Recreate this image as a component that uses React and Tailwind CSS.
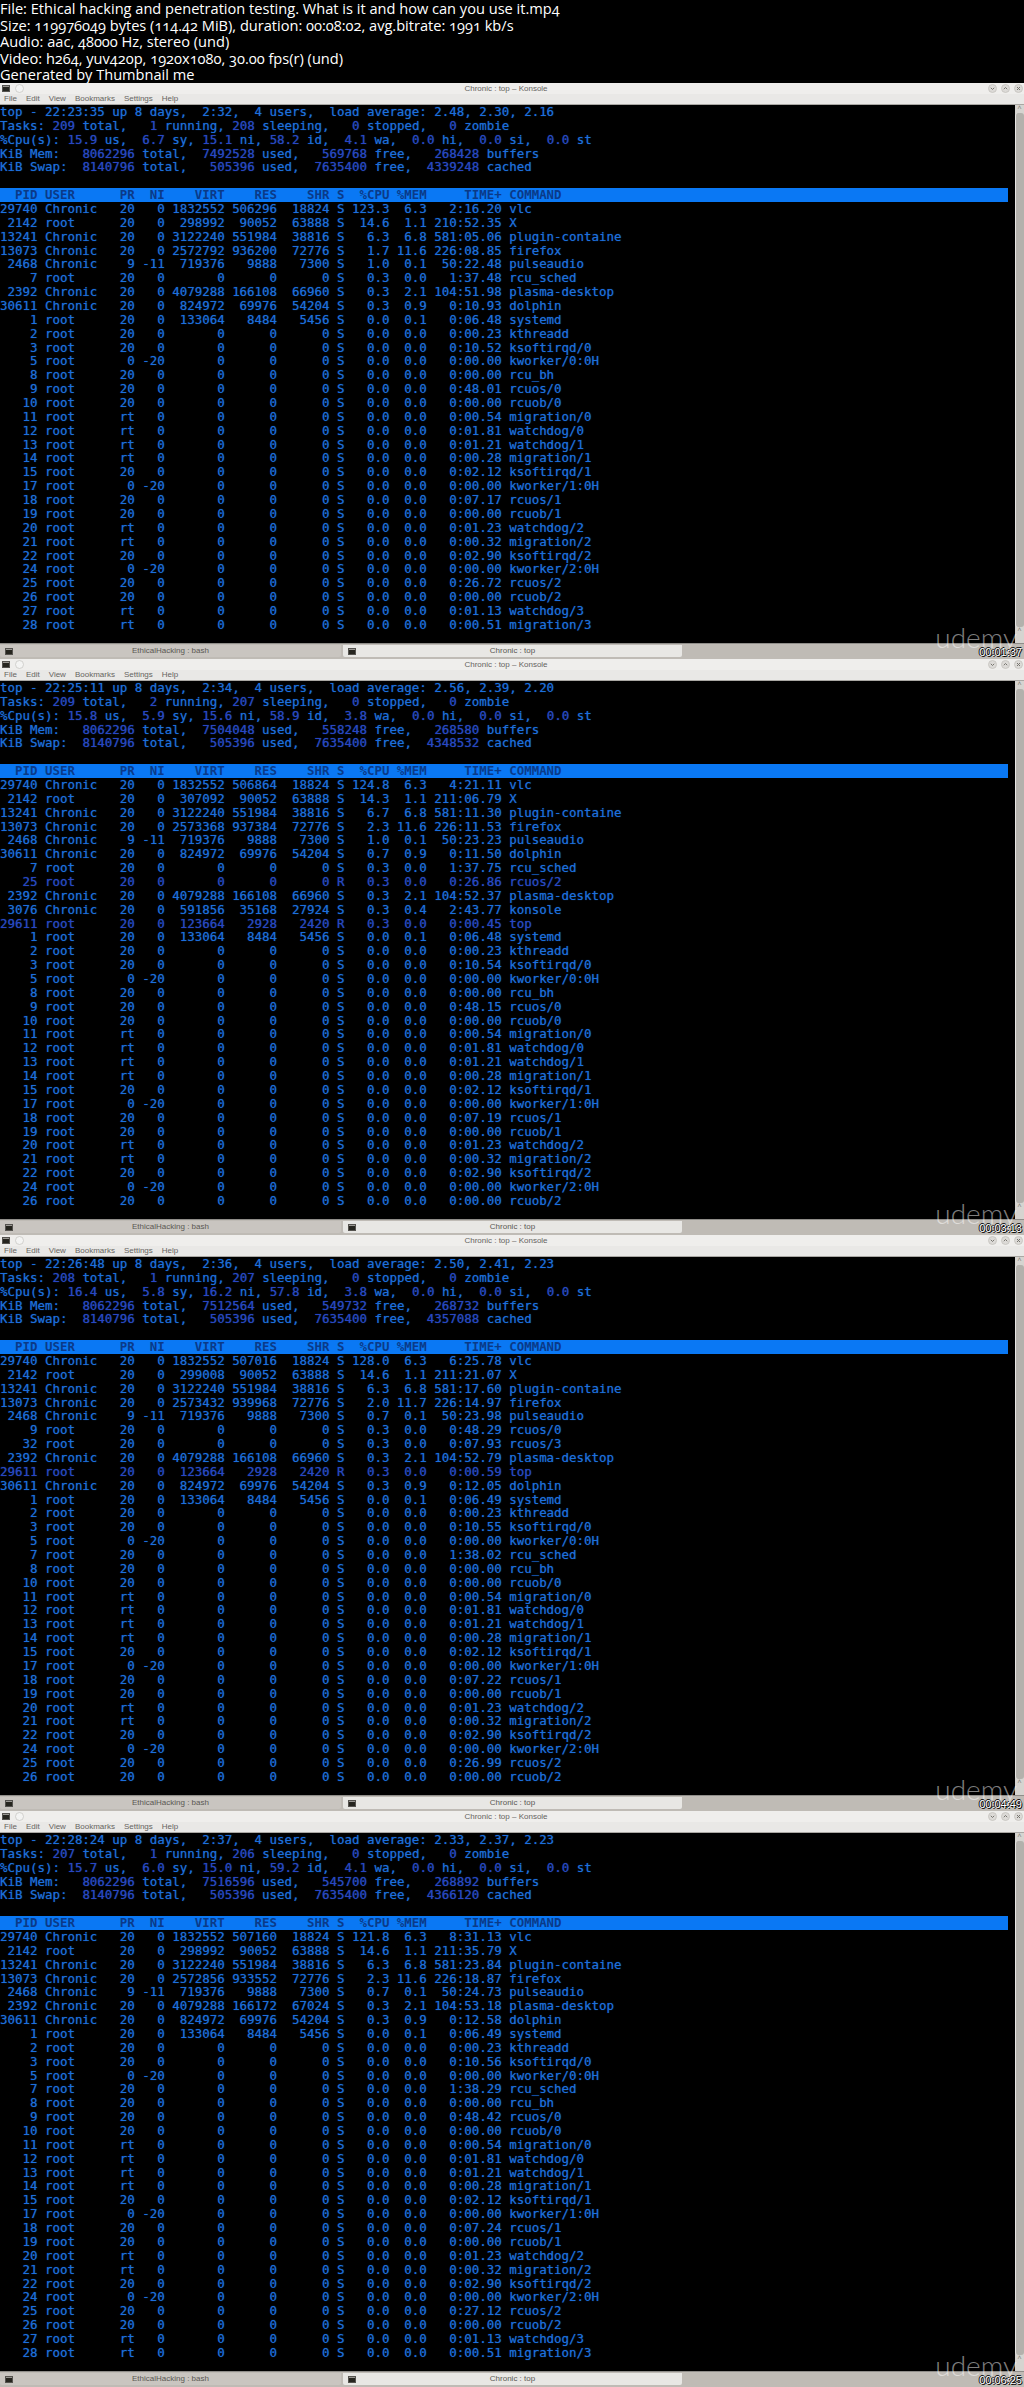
import React from "react";

const KERNEL = {
  2: ["20", "0", "0:00.23", "kthreadd"], 3: ["20", "0", "", "ksoftirqd/0"], 5: ["0", "-20", "0:00.00", "kworker/0:0H"],
  7: ["20", "0", "", "rcu_sched"], 8: ["20", "0", "0:00.00", "rcu_bh"], 9: ["20", "0", "", "rcuos/0"],
  10: ["20", "0", "0:00.00", "rcuob/0"], 11: ["rt", "0", "0:00.54", "migration/0"], 12: ["rt", "0", "0:01.81", "watchdog/0"],
  13: ["rt", "0", "0:01.21", "watchdog/1"], 14: ["rt", "0", "0:00.28", "migration/1"], 15: ["20", "0", "0:02.12", "ksoftirqd/1"],
  17: ["0", "-20", "0:00.00", "kworker/1:0H"], 18: ["20", "0", "", "rcuos/1"], 19: ["20", "0", "0:00.00", "rcuob/1"],
  20: ["rt", "0", "0:01.23", "watchdog/2"], 21: ["rt", "0", "0:00.32", "migration/2"], 22: ["20", "0", "0:02.90", "ksoftirqd/2"],
  24: ["0", "-20", "0:00.00", "kworker/2:0H"], 25: ["20", "0", "", "rcuos/2"], 26: ["20", "0", "0:00.00", "rcuob/2"],
  27: ["rt", "0", "0:01.13", "watchdog/3"], 28: ["rt", "0", "0:00.51", "migration/3"],
};

const k = (pids, times) =>
  pids.map((p) => {
    const [pr, ni, t, cmd] = KERNEL[p];
    return `${p} root ${pr} ${ni} 0 0 0 S 0.0 0.0 ${times[p] || t} ${cmd}`;
  });

const fmt = (line) => {
  const [pid, user, pr, ni, virt, res, shr, s, cpu, mem, time, cmd] = line.split(" ");
  return (
    pid.padStart(5) + " " + user.padEnd(9) + pr.padStart(3) + ni.padStart(4) + virt.padStart(8) + res.padStart(7) +
    shr.padStart(7) + " " + s + cpu.padStart(6) + mem.padStart(5) + time.padStart(10) + " " + cmd
  );
};

const FRAMES = [
  {
    stamp: "00:01:37",
    summary: [
      "top - 22:23:35 up 8 days,  2:32,  4 users,  load average: 2.48, 2.30, 2.16",
      "Tasks: 209 total,   1 running, 208 sleeping,   0 stopped,   0 zombie",
      "%Cpu(s): 15.9 us,  6.7 sy, 15.1 ni, 58.2 id,  4.1 wa,  0.0 hi,  0.0 si,  0.0 st",
      "KiB Mem:   8062296 total,  7492528 used,   569768 free,   268428 buffers",
      "KiB Swap:  8140796 total,   505396 used,  7635400 free,  4339248 cached",
    ],
    rows: [
      "29740 Chronic 20 0 1832552 506296 18824 S 123.3 6.3 2:16.20 vlc",
      "2142 root 20 0 298992 90052 63888 S 14.6 1.1 210:52.35 X",
      "13241 Chronic 20 0 3122240 551984 38816 S 6.3 6.8 581:05.06 plugin-containe",
      "13073 Chronic 20 0 2572792 936200 72776 S 1.7 11.6 226:08.85 firefox",
      "2468 Chronic 9 -11 719376 9888 7300 S 1.0 0.1 50:22.48 pulseaudio",
      "7 root 20 0 0 0 0 S 0.3 0.0 1:37.48 rcu_sched",
      "2392 Chronic 20 0 4079288 166108 66960 S 0.3 2.1 104:51.98 plasma-desktop",
      "30611 Chronic 20 0 824972 69976 54204 S 0.3 0.9 0:10.93 dolphin",
      "1 root 20 0 133064 8484 5456 S 0.0 0.1 0:06.48 systemd",
      ...k([2, 3, 5, 8, 9, 10, 11, 12, 13, 14, 15, 17, 18, 19, 20, 21, 22, 24, 25, 26, 27, 28], { 3: "0:10.52", 9: "0:48.01", 18: "0:07.17", 25: "0:26.72" }),
    ],
  },
  {
    stamp: "00:03:13",
    summary: [
      "top - 22:25:11 up 8 days,  2:34,  4 users,  load average: 2.56, 2.39, 2.20",
      "Tasks: 209 total,   2 running, 207 sleeping,   0 stopped,   0 zombie",
      "%Cpu(s): 15.8 us,  5.9 sy, 15.6 ni, 58.9 id,  3.8 wa,  0.0 hi,  0.0 si,  0.0 st",
      "KiB Mem:   8062296 total,  7504048 used,   558248 free,   268580 buffers",
      "KiB Swap:  8140796 total,   505396 used,  7635400 free,  4348532 cached",
    ],
    rows: [
      "29740 Chronic 20 0 1832552 506864 18824 S 124.8 6.3 4:21.11 vlc",
      "2142 root 20 0 307092 90052 63888 S 14.3 1.1 211:06.79 X",
      "13241 Chronic 20 0 3122240 551984 38816 S 6.7 6.8 581:11.30 plugin-containe",
      "13073 Chronic 20 0 2573368 937384 72776 S 2.3 11.6 226:11.53 firefox",
      "2468 Chronic 9 -11 719376 9888 7300 S 1.0 0.1 50:23.23 pulseaudio",
      "30611 Chronic 20 0 824972 69976 54204 S 0.7 0.9 0:11.50 dolphin",
      "7 root 20 0 0 0 0 S 0.3 0.0 1:37.75 rcu_sched",
      "25 root 20 0 0 0 0 R 0.3 0.0 0:26.86 rcuos/2",
      "2392 Chronic 20 0 4079288 166108 66960 S 0.3 2.1 104:52.37 plasma-desktop",
      "3076 Chronic 20 0 591856 35168 27924 S 0.3 0.4 2:43.77 konsole",
      "29611 root 20 0 123664 2928 2420 R 0.3 0.0 0:00.45 top",
      "1 root 20 0 133064 8484 5456 S 0.0 0.1 0:06.48 systemd",
      ...k([2, 3, 5, 8, 9, 10, 11, 12, 13, 14, 15, 17, 18, 19, 20, 21, 22, 24, 26], { 3: "0:10.54", 9: "0:48.15", 18: "0:07.19" }),
    ],
  },
  {
    stamp: "00:04:49",
    summary: [
      "top - 22:26:48 up 8 days,  2:36,  4 users,  load average: 2.50, 2.41, 2.23",
      "Tasks: 208 total,   1 running, 207 sleeping,   0 stopped,   0 zombie",
      "%Cpu(s): 16.4 us,  5.8 sy, 16.2 ni, 57.8 id,  3.8 wa,  0.0 hi,  0.0 si,  0.0 st",
      "KiB Mem:   8062296 total,  7512564 used,   549732 free,   268732 buffers",
      "KiB Swap:  8140796 total,   505396 used,  7635400 free,  4357088 cached",
    ],
    rows: [
      "29740 Chronic 20 0 1832552 507016 18824 S 128.0 6.3 6:25.78 vlc",
      "2142 root 20 0 299008 90052 63888 S 14.6 1.1 211:21.07 X",
      "13241 Chronic 20 0 3122240 551984 38816 S 6.3 6.8 581:17.60 plugin-containe",
      "13073 Chronic 20 0 2573432 939968 72776 S 2.0 11.7 226:14.97 firefox",
      "2468 Chronic 9 -11 719376 9888 7300 S 0.7 0.1 50:23.98 pulseaudio",
      "9 root 20 0 0 0 0 S 0.3 0.0 0:48.29 rcuos/0",
      "32 root 20 0 0 0 0 S 0.3 0.0 0:07.93 rcuos/3",
      "2392 Chronic 20 0 4079288 166108 66960 S 0.3 2.1 104:52.79 plasma-desktop",
      "29611 root 20 0 123664 2928 2420 R 0.3 0.0 0:00.59 top",
      "30611 Chronic 20 0 824972 69976 54204 S 0.3 0.9 0:12.05 dolphin",
      "1 root 20 0 133064 8484 5456 S 0.0 0.1 0:06.49 systemd",
      ...k([2, 3, 5, 7, 8, 10, 11, 12, 13, 14, 15, 17, 18, 19, 20, 21, 22, 24, 25, 26], { 3: "0:10.55", 7: "1:38.02", 18: "0:07.22", 25: "0:26.99" }),
    ],
  },
  {
    stamp: "00:06:25",
    summary: [
      "top - 22:28:24 up 8 days,  2:37,  4 users,  load average: 2.33, 2.37, 2.23",
      "Tasks: 207 total,   1 running, 206 sleeping,   0 stopped,   0 zombie",
      "%Cpu(s): 15.7 us,  6.0 sy, 15.0 ni, 59.2 id,  4.1 wa,  0.0 hi,  0.0 si,  0.0 st",
      "KiB Mem:   8062296 total,  7516596 used,   545700 free,   268892 buffers",
      "KiB Swap:  8140796 total,   505396 used,  7635400 free,  4366120 cached",
    ],
    rows: [
      "29740 Chronic 20 0 1832552 507160 18824 S 121.8 6.3 8:31.13 vlc",
      "2142 root 20 0 298992 90052 63888 S 14.6 1.1 211:35.79 X",
      "13241 Chronic 20 0 3122240 551984 38816 S 6.3 6.8 581:23.84 plugin-containe",
      "13073 Chronic 20 0 2572856 933552 72776 S 2.3 11.6 226:18.87 firefox",
      "2468 Chronic 9 -11 719376 9888 7300 S 0.7 0.1 50:24.73 pulseaudio",
      "2392 Chronic 20 0 4079288 166172 67024 S 0.3 2.1 104:53.18 plasma-desktop",
      "30611 Chronic 20 0 824972 69976 54204 S 0.3 0.9 0:12.58 dolphin",
      "1 root 20 0 133064 8484 5456 S 0.0 0.1 0:06.49 systemd",
      ...k([2, 3, 5, 7, 8, 9, 10, 11, 12, 13, 14, 15, 17, 18, 19, 20, 21, 22, 24, 25, 26, 27, 28], { 3: "0:10.56", 7: "1:38.29", 9: "0:48.42", 18: "0:07.24", 25: "0:27.12" }),
    ],
  },
];

const HEADER = "  PID USER      PR  NI    VIRT    RES    SHR S  %CPU %MEM     TIME+ COMMAND";

function TermIcon() {
  return (
    <svg width="8" height="7" viewBox="0 0 8 7" className="shrink-0">
      <rect x="0" y="0" width="8" height="7" fill="#55534f" />
      <rect x="1" y="2" width="6" height="4" fill="#26251f" />
      <rect x="1" y="1" width="6" height="1" fill="#9a9893" />
    </svg>
  );
}

function WinButton({ glyph }) {
  return (
    <svg width="9" height="9" viewBox="0 0 9 9" className="shrink-0">
      <circle cx="4.5" cy="4.5" r="4" fill="#dcdad7" stroke="#c4c2be" strokeWidth="0.8" />
      <path d={glyph} fill="none" stroke="#77756f" strokeWidth="1" />
    </svg>
  );
}

function Summary({ line, plain }) {
  if (plain) return <div className="h-[13.87px] whitespace-pre">{line}</div>;
  return (
    <div className="h-[13.87px] whitespace-pre">
      {line.split(/(\d+(?:\.\d+)?)/).map((part, i) =>
        i % 2 ? (
          <span key={i} className="text-[#2a45c4]">
            {part}
          </span>
        ) : (
          <span key={i}>{part}</span>
        ),
      )}
    </div>
  );
}

function Frame({ frame }) {
  return (
    <section className="relative flex h-[576px] flex-col overflow-hidden">
      <div className="relative flex h-[11px] shrink-0 items-center justify-between bg-[#efeeec] pl-[2px] pr-[1px]">
        <div className="flex items-center gap-[5px]">
          <TermIcon />
          <svg width="9" height="9" viewBox="0 0 9 9" className="shrink-0">
            <circle cx="4.5" cy="4.5" r="4" fill="#f4f4f3" stroke="#c9c8c5" strokeWidth="0.8" />
          </svg>
        </div>
        <div className="text-[8px] leading-[11px] text-[#66645f] [font-family:'Liberation_Sans',sans-serif]">Chronic : top – Konsole</div>
        <div className="flex items-center gap-[4px]">
          <WinButton glyph="M2.8 3.8 L4.5 5.5 L6.2 3.8" />
          <WinButton glyph="M2.8 5.2 L4.5 3.5 L6.2 5.2" />
          <WinButton glyph="M3 3 L6 6 M6 3 L3 6" />
        </div>
      </div>
      <nav className="flex h-[11px] shrink-0 items-center gap-[9px] border-b border-[#a9a7a3] bg-[#e9e8e6] pl-[4px] text-[8px] text-[#66645f] [font-family:'Liberation_Sans',sans-serif]">
        <span>File</span>
        <span>Edit</span>
        <span>View</span>
        <span>Bookmarks</span>
        <span>Settings</span>
        <span>Help</span>
      </nav>
      <div className="flex min-h-0 flex-1">
        <pre className="min-w-0 flex-1 overflow-hidden bg-black pr-[7px] text-[12.44px] leading-[13.87px] text-[#1c6fdc] [font-family:'DejaVu_Sans_Mono',monospace] [text-shadow:0_0_1px_rgba(28,111,220,0.7)]">
          {frame.summary.map((line, i) => (
            <Summary key={i} line={line} plain={i === 0} />
          ))}
          <div className="h-[13.87px]" />
          <div className="h-[13.87px] bg-[#0a78f4] font-bold text-[#0a3a88] [text-shadow:none]">{HEADER}</div>
          {frame.rows.map((row, i) => (
            <div key={i} className={row.includes(" R ") ? "h-[13.87px] text-[#2a45c4]" : "h-[13.87px]"}>
              {fmt(row)}
            </div>
          ))}
        </pre>
        <aside className="flex w-[9px] shrink-0 flex-col items-center bg-[#d6d4d0]">
          <span className="h-[8px] w-full text-center text-[7px] leading-[8px] text-[#77756f]">^</span>
          <span className="w-full flex-1 rounded-[3px] border-l border-[#e6e5e2] bg-[#b3b1ac]" />
          <span className="h-[8px] w-full text-center text-[7px] leading-[8px] text-[#77756f]">^</span>
          <span className="h-[8px] w-full" />
        </aside>
      </div>
      <div className="flex h-[16px] shrink-0 items-start gap-[2px] border-t border-[#8f8d89] bg-[#bfbbb5] pt-[1px]">
        <div className="flex h-[12px] w-[341px] items-center rounded-b-[2px] bg-[#c9c5c0] pl-[5px] text-[8px] text-[#5a5853] [font-family:'Liberation_Sans',sans-serif]">
          <TermIcon />
          <span className="flex-1 pr-[13px] text-center">EthicalHacking : bash</span>
        </div>
        <div className="flex h-[12px] w-[339px] items-center rounded-b-[2px] bg-[#e8e7e4] pl-[5px] text-[8px] text-[#5a5853] [font-family:'Liberation_Sans',sans-serif]">
          <TermIcon />
          <span className="flex-1 pr-[13px] text-center">Chronic : top</span>
        </div>
      </div>
      <div className="absolute bottom-[8px] right-[7px] text-[28px] font-light leading-none text-white/50 [font-family:Lato,sans-serif]">udemy</div>
      <div className="absolute bottom-[0px] right-[2px] text-[11px] leading-[14px] text-white [font-family:'Liberation_Sans',sans-serif] [text-shadow:1px_1px_0_#000,-1px_0_0_#000,0_-1px_0_#000]">
        {frame.stamp}
      </div>
    </section>
  );
}

export default function App() {
  return (
    <main className="w-[1024px] bg-black">
      <header className="h-[83px] text-[14.6px] leading-[16.5px] text-white oldstyle-nums [font-family:'Open_Sans',sans-serif]">
        <div>File: Ethical hacking and penetration testing. What is it and how can you use it.mp4</div>
        <div>Size: 119976049 bytes (114.42 MiB), duration: 00:08:02, avg.bitrate: 1991 kb/s</div>
        <div>Audio: aac, 48000 Hz, stereo (und)</div>
        <div>Video: h264, yuv420p, 1920x1080, 30.00 fps(r) (und)</div>
        <div>Generated by Thumbnail me</div>
      </header>
      {FRAMES.map((f) => (
        <Frame key={f.stamp} frame={f} />
      ))}
    </main>
  );
}
